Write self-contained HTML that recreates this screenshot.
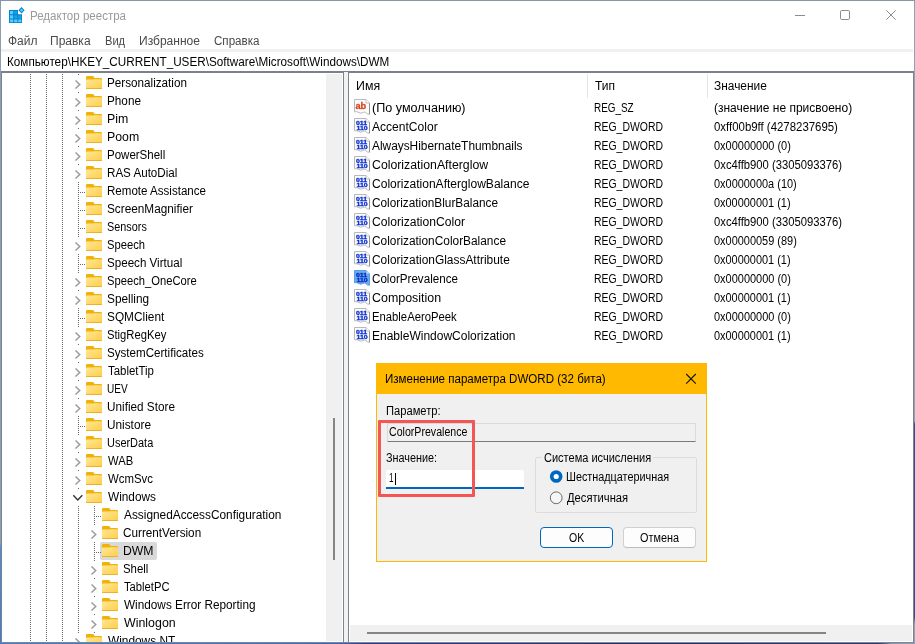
<!DOCTYPE html>
<html lang="ru"><head><meta charset="utf-8"><title>Редактор реестра</title>
<style>
html,body{margin:0;padding:0}
body{width:915px;height:644px;overflow:hidden;position:relative;background:#1d3a86;font-family:'Liberation Sans',sans-serif;font-size:12px}
div,svg,span{position:absolute}
#root{left:0;top:0;width:915px;height:644px;will-change:transform;overflow:hidden}
.t{white-space:pre;line-height:16px;transform-origin:0 0;display:block}
#desk{left:0;top:0;width:915px;height:644px;background:linear-gradient(90deg,#3d80d0 0,#3a78c8 22%,#2f68c4 37%,#1f3f94 40%,#1b3278 70%,#22387a 96%,#7f97bd 97.5%,#8fa3bd 100%)}
#frame{left:0;top:0;width:914px;height:643px;background:linear-gradient(180deg,#7f97ad 0,#8a9fb3 1%,#8a9fb3 84.3%,#4a8fd2 85.3%,#3d7ccb 100%)}
#rb{left:914px;top:0;width:1px;height:643px;background:linear-gradient(180deg,#7f97ad 0,#8fa3b5 1%,#8fa3b5 65.4%,#2f4f9a 66%,#2f4f9a 96%,#8fa3bd 97%)}
#win{left:1px;top:1px;width:913px;height:641px;background:#fff}
#dk{left:0;top:643px;width:915px;height:1px;background:linear-gradient(90deg,#3d80d0 0,#3a78c8 22%,#2f68c4 37%,#1f3f94 40%,#1b3278 70%,#22387a 96%,#7f97bd 97.5%,#8fa3bd 100%)}
#bb{left:1px;top:642px;width:913px;height:1px;background:#80858f}
#strip{left:1px;top:49px;width:912px;height:3px;background:#f0f0f0}
#hline{left:1px;top:71px;width:913px;height:2px;background:#7c8088}
.vline{width:1px;top:73px;height:570px;background:#7d828d}
.dots{width:1px;top:74px;height:568px;background:repeating-linear-gradient(180deg,#6a6a6a 0 1px,transparent 1px 2px)}
.hd{height:1px;background:repeating-linear-gradient(90deg,#6a6a6a 0 1px,transparent 1px 2px)}
.er{width:9px;height:16px;background:#fff}
.sel{background:#d9d9d9;border-radius:2px}
#tree{left:2px;top:73px;width:341px;height:569px;overflow:hidden}
</style></head><body><div id="root">
<svg width="0" height="0"><defs><linearGradient id="fg" x1="0" y1="0" x2="1" y2="1"><stop offset="0" stop-color="#ffe796"/><stop offset="1" stop-color="#ffcd48"/></linearGradient></defs></svg>
<div id="desk"></div><div id="frame"></div><div id="rb"></div>
<div id="win"></div>
<!--TITLE-->
<svg style="left:9px;top:7px" width="16" height="17" viewBox="0 0 16 17">
<path d="M0 3H9V7.3H13V16H0Z" fill="#0a7fcc"/>
<g fill="#4fd0ff"><rect x="1" y="4" width="3.2" height="3.2"/><rect x="1" y="8.3" width="3.2" height="3.2"/><rect x="1" y="12.5" width="3.2" height="2.7"/><rect x="5.2" y="12.5" width="3.2" height="2.7"/><rect x="9.3" y="12.5" width="3" height="2.7"/></g>
<g fill="#0ca5e6"><rect x="5.2" y="4" width="3" height="3.2"/><rect x="5.2" y="8.3" width="3.2" height="3.2"/><rect x="9.3" y="8.3" width="3" height="3.2"/></g>
<path d="M12.5 0L15.6 3.2L12.5 6.4L9.4 3.2Z" fill="#0a7fcc"/><path d="M12.5 1.5L14.2 3.2L12.5 4.9L10.8 3.2Z" fill="#4fd0ff"/>
</svg>
<svg style="left:790px;top:5px" width="115" height="22" viewBox="0 0 115 22" fill="none" stroke="#8c8c8c" stroke-width="1">
<path d="M5 10.5H15"/><rect x="50.5" y="5.5" width="9" height="9" rx="1.3"/><path d="M96.3 5.3L105.7 14.7M105.7 5.3L96.3 14.7"/></svg>
<div id="strip"></div><div id="hline"></div>
<!--TREE-->
<div class="vline" style="left:1px"></div>
<div class="dots" style="left:30px"></div><div class="dots" style="left:46px"></div><div class="dots" style="left:62px"></div><div class="dots" style="left:78px"></div>
<div class="dots" style="left:94px;top:506px;height:128px"></div>
<div class="er" style="left:74px;top:76px"></div><svg class="ch" style="left:74px;top:79px" width="8" height="11" viewBox="0 0 8 11"><path d="M1.5 1.5L5.7 5.5L1.5 9.5" fill="none" stroke="#9c9c9c" stroke-width="1.55"/></svg><svg class="fo" style="left:86px;top:76px" width="16" height="13" viewBox="0 0 16 13"><path d="M0 1.2Q0 0 1.2 0H6.6Q7.3 0 7.7 .6L8.6 2H14.8Q16 2 16 3.2V11.8Q16 13 14.8 13H1.2Q0 13 0 11.8Z" fill="#f0b20a"/><path d="M0 4.6Q0 3.6 1 3.6H7.2Q7.8 3.6 8.3 3.3H15Q16 3.3 16 4.3V11.8Q16 13 14.8 13H1.2Q0 13 0 11.8Z" fill="url(#fg)"/><path d="M0 11.4V11.8Q0 13 1.2 13H14.8Q16 13 16 11.8V11.4Q16 12.2 14.8 12.2H1.2Q0 12.2 0 11.4Z" fill="#e5a61a"/></svg><div class="er" style="left:74px;top:94px"></div><svg class="ch" style="left:74px;top:97px" width="8" height="11" viewBox="0 0 8 11"><path d="M1.5 1.5L5.7 5.5L1.5 9.5" fill="none" stroke="#9c9c9c" stroke-width="1.55"/></svg><svg class="fo" style="left:86px;top:94px" width="16" height="13" viewBox="0 0 16 13"><path d="M0 1.2Q0 0 1.2 0H6.6Q7.3 0 7.7 .6L8.6 2H14.8Q16 2 16 3.2V11.8Q16 13 14.8 13H1.2Q0 13 0 11.8Z" fill="#f0b20a"/><path d="M0 4.6Q0 3.6 1 3.6H7.2Q7.8 3.6 8.3 3.3H15Q16 3.3 16 4.3V11.8Q16 13 14.8 13H1.2Q0 13 0 11.8Z" fill="url(#fg)"/><path d="M0 11.4V11.8Q0 13 1.2 13H14.8Q16 13 16 11.8V11.4Q16 12.2 14.8 12.2H1.2Q0 12.2 0 11.4Z" fill="#e5a61a"/></svg><div class="er" style="left:74px;top:112px"></div><svg class="ch" style="left:74px;top:115px" width="8" height="11" viewBox="0 0 8 11"><path d="M1.5 1.5L5.7 5.5L1.5 9.5" fill="none" stroke="#9c9c9c" stroke-width="1.55"/></svg><svg class="fo" style="left:86px;top:112px" width="16" height="13" viewBox="0 0 16 13"><path d="M0 1.2Q0 0 1.2 0H6.6Q7.3 0 7.7 .6L8.6 2H14.8Q16 2 16 3.2V11.8Q16 13 14.8 13H1.2Q0 13 0 11.8Z" fill="#f0b20a"/><path d="M0 4.6Q0 3.6 1 3.6H7.2Q7.8 3.6 8.3 3.3H15Q16 3.3 16 4.3V11.8Q16 13 14.8 13H1.2Q0 13 0 11.8Z" fill="url(#fg)"/><path d="M0 11.4V11.8Q0 13 1.2 13H14.8Q16 13 16 11.8V11.4Q16 12.2 14.8 12.2H1.2Q0 12.2 0 11.4Z" fill="#e5a61a"/></svg><div class="er" style="left:74px;top:130px"></div><svg class="ch" style="left:74px;top:133px" width="8" height="11" viewBox="0 0 8 11"><path d="M1.5 1.5L5.7 5.5L1.5 9.5" fill="none" stroke="#9c9c9c" stroke-width="1.55"/></svg><svg class="fo" style="left:86px;top:130px" width="16" height="13" viewBox="0 0 16 13"><path d="M0 1.2Q0 0 1.2 0H6.6Q7.3 0 7.7 .6L8.6 2H14.8Q16 2 16 3.2V11.8Q16 13 14.8 13H1.2Q0 13 0 11.8Z" fill="#f0b20a"/><path d="M0 4.6Q0 3.6 1 3.6H7.2Q7.8 3.6 8.3 3.3H15Q16 3.3 16 4.3V11.8Q16 13 14.8 13H1.2Q0 13 0 11.8Z" fill="url(#fg)"/><path d="M0 11.4V11.8Q0 13 1.2 13H14.8Q16 13 16 11.8V11.4Q16 12.2 14.8 12.2H1.2Q0 12.2 0 11.4Z" fill="#e5a61a"/></svg><div class="er" style="left:74px;top:148px"></div><svg class="ch" style="left:74px;top:151px" width="8" height="11" viewBox="0 0 8 11"><path d="M1.5 1.5L5.7 5.5L1.5 9.5" fill="none" stroke="#9c9c9c" stroke-width="1.55"/></svg><svg class="fo" style="left:86px;top:148px" width="16" height="13" viewBox="0 0 16 13"><path d="M0 1.2Q0 0 1.2 0H6.6Q7.3 0 7.7 .6L8.6 2H14.8Q16 2 16 3.2V11.8Q16 13 14.8 13H1.2Q0 13 0 11.8Z" fill="#f0b20a"/><path d="M0 4.6Q0 3.6 1 3.6H7.2Q7.8 3.6 8.3 3.3H15Q16 3.3 16 4.3V11.8Q16 13 14.8 13H1.2Q0 13 0 11.8Z" fill="url(#fg)"/><path d="M0 11.4V11.8Q0 13 1.2 13H14.8Q16 13 16 11.8V11.4Q16 12.2 14.8 12.2H1.2Q0 12.2 0 11.4Z" fill="#e5a61a"/></svg><div class="er" style="left:74px;top:166px"></div><svg class="ch" style="left:74px;top:169px" width="8" height="11" viewBox="0 0 8 11"><path d="M1.5 1.5L5.7 5.5L1.5 9.5" fill="none" stroke="#9c9c9c" stroke-width="1.55"/></svg><svg class="fo" style="left:86px;top:166px" width="16" height="13" viewBox="0 0 16 13"><path d="M0 1.2Q0 0 1.2 0H6.6Q7.3 0 7.7 .6L8.6 2H14.8Q16 2 16 3.2V11.8Q16 13 14.8 13H1.2Q0 13 0 11.8Z" fill="#f0b20a"/><path d="M0 4.6Q0 3.6 1 3.6H7.2Q7.8 3.6 8.3 3.3H15Q16 3.3 16 4.3V11.8Q16 13 14.8 13H1.2Q0 13 0 11.8Z" fill="url(#fg)"/><path d="M0 11.4V11.8Q0 13 1.2 13H14.8Q16 13 16 11.8V11.4Q16 12.2 14.8 12.2H1.2Q0 12.2 0 11.4Z" fill="#e5a61a"/></svg><div class="hd" style="left:80px;top:192px;width:6px"></div><svg class="fo" style="left:86px;top:184px" width="16" height="13" viewBox="0 0 16 13"><path d="M0 1.2Q0 0 1.2 0H6.6Q7.3 0 7.7 .6L8.6 2H14.8Q16 2 16 3.2V11.8Q16 13 14.8 13H1.2Q0 13 0 11.8Z" fill="#f0b20a"/><path d="M0 4.6Q0 3.6 1 3.6H7.2Q7.8 3.6 8.3 3.3H15Q16 3.3 16 4.3V11.8Q16 13 14.8 13H1.2Q0 13 0 11.8Z" fill="url(#fg)"/><path d="M0 11.4V11.8Q0 13 1.2 13H14.8Q16 13 16 11.8V11.4Q16 12.2 14.8 12.2H1.2Q0 12.2 0 11.4Z" fill="#e5a61a"/></svg><div class="hd" style="left:80px;top:210px;width:6px"></div><svg class="fo" style="left:86px;top:202px" width="16" height="13" viewBox="0 0 16 13"><path d="M0 1.2Q0 0 1.2 0H6.6Q7.3 0 7.7 .6L8.6 2H14.8Q16 2 16 3.2V11.8Q16 13 14.8 13H1.2Q0 13 0 11.8Z" fill="#f0b20a"/><path d="M0 4.6Q0 3.6 1 3.6H7.2Q7.8 3.6 8.3 3.3H15Q16 3.3 16 4.3V11.8Q16 13 14.8 13H1.2Q0 13 0 11.8Z" fill="url(#fg)"/><path d="M0 11.4V11.8Q0 13 1.2 13H14.8Q16 13 16 11.8V11.4Q16 12.2 14.8 12.2H1.2Q0 12.2 0 11.4Z" fill="#e5a61a"/></svg><div class="hd" style="left:80px;top:228px;width:6px"></div><svg class="fo" style="left:86px;top:220px" width="16" height="13" viewBox="0 0 16 13"><path d="M0 1.2Q0 0 1.2 0H6.6Q7.3 0 7.7 .6L8.6 2H14.8Q16 2 16 3.2V11.8Q16 13 14.8 13H1.2Q0 13 0 11.8Z" fill="#f0b20a"/><path d="M0 4.6Q0 3.6 1 3.6H7.2Q7.8 3.6 8.3 3.3H15Q16 3.3 16 4.3V11.8Q16 13 14.8 13H1.2Q0 13 0 11.8Z" fill="url(#fg)"/><path d="M0 11.4V11.8Q0 13 1.2 13H14.8Q16 13 16 11.8V11.4Q16 12.2 14.8 12.2H1.2Q0 12.2 0 11.4Z" fill="#e5a61a"/></svg><div class="er" style="left:74px;top:238px"></div><svg class="ch" style="left:74px;top:241px" width="8" height="11" viewBox="0 0 8 11"><path d="M1.5 1.5L5.7 5.5L1.5 9.5" fill="none" stroke="#9c9c9c" stroke-width="1.55"/></svg><svg class="fo" style="left:86px;top:238px" width="16" height="13" viewBox="0 0 16 13"><path d="M0 1.2Q0 0 1.2 0H6.6Q7.3 0 7.7 .6L8.6 2H14.8Q16 2 16 3.2V11.8Q16 13 14.8 13H1.2Q0 13 0 11.8Z" fill="#f0b20a"/><path d="M0 4.6Q0 3.6 1 3.6H7.2Q7.8 3.6 8.3 3.3H15Q16 3.3 16 4.3V11.8Q16 13 14.8 13H1.2Q0 13 0 11.8Z" fill="url(#fg)"/><path d="M0 11.4V11.8Q0 13 1.2 13H14.8Q16 13 16 11.8V11.4Q16 12.2 14.8 12.2H1.2Q0 12.2 0 11.4Z" fill="#e5a61a"/></svg><div class="hd" style="left:80px;top:264px;width:6px"></div><svg class="fo" style="left:86px;top:256px" width="16" height="13" viewBox="0 0 16 13"><path d="M0 1.2Q0 0 1.2 0H6.6Q7.3 0 7.7 .6L8.6 2H14.8Q16 2 16 3.2V11.8Q16 13 14.8 13H1.2Q0 13 0 11.8Z" fill="#f0b20a"/><path d="M0 4.6Q0 3.6 1 3.6H7.2Q7.8 3.6 8.3 3.3H15Q16 3.3 16 4.3V11.8Q16 13 14.8 13H1.2Q0 13 0 11.8Z" fill="url(#fg)"/><path d="M0 11.4V11.8Q0 13 1.2 13H14.8Q16 13 16 11.8V11.4Q16 12.2 14.8 12.2H1.2Q0 12.2 0 11.4Z" fill="#e5a61a"/></svg><div class="er" style="left:74px;top:274px"></div><svg class="ch" style="left:74px;top:277px" width="8" height="11" viewBox="0 0 8 11"><path d="M1.5 1.5L5.7 5.5L1.5 9.5" fill="none" stroke="#9c9c9c" stroke-width="1.55"/></svg><svg class="fo" style="left:86px;top:274px" width="16" height="13" viewBox="0 0 16 13"><path d="M0 1.2Q0 0 1.2 0H6.6Q7.3 0 7.7 .6L8.6 2H14.8Q16 2 16 3.2V11.8Q16 13 14.8 13H1.2Q0 13 0 11.8Z" fill="#f0b20a"/><path d="M0 4.6Q0 3.6 1 3.6H7.2Q7.8 3.6 8.3 3.3H15Q16 3.3 16 4.3V11.8Q16 13 14.8 13H1.2Q0 13 0 11.8Z" fill="url(#fg)"/><path d="M0 11.4V11.8Q0 13 1.2 13H14.8Q16 13 16 11.8V11.4Q16 12.2 14.8 12.2H1.2Q0 12.2 0 11.4Z" fill="#e5a61a"/></svg><div class="er" style="left:74px;top:292px"></div><svg class="ch" style="left:74px;top:295px" width="8" height="11" viewBox="0 0 8 11"><path d="M1.5 1.5L5.7 5.5L1.5 9.5" fill="none" stroke="#9c9c9c" stroke-width="1.55"/></svg><svg class="fo" style="left:86px;top:292px" width="16" height="13" viewBox="0 0 16 13"><path d="M0 1.2Q0 0 1.2 0H6.6Q7.3 0 7.7 .6L8.6 2H14.8Q16 2 16 3.2V11.8Q16 13 14.8 13H1.2Q0 13 0 11.8Z" fill="#f0b20a"/><path d="M0 4.6Q0 3.6 1 3.6H7.2Q7.8 3.6 8.3 3.3H15Q16 3.3 16 4.3V11.8Q16 13 14.8 13H1.2Q0 13 0 11.8Z" fill="url(#fg)"/><path d="M0 11.4V11.8Q0 13 1.2 13H14.8Q16 13 16 11.8V11.4Q16 12.2 14.8 12.2H1.2Q0 12.2 0 11.4Z" fill="#e5a61a"/></svg><div class="hd" style="left:80px;top:318px;width:6px"></div><svg class="fo" style="left:86px;top:310px" width="16" height="13" viewBox="0 0 16 13"><path d="M0 1.2Q0 0 1.2 0H6.6Q7.3 0 7.7 .6L8.6 2H14.8Q16 2 16 3.2V11.8Q16 13 14.8 13H1.2Q0 13 0 11.8Z" fill="#f0b20a"/><path d="M0 4.6Q0 3.6 1 3.6H7.2Q7.8 3.6 8.3 3.3H15Q16 3.3 16 4.3V11.8Q16 13 14.8 13H1.2Q0 13 0 11.8Z" fill="url(#fg)"/><path d="M0 11.4V11.8Q0 13 1.2 13H14.8Q16 13 16 11.8V11.4Q16 12.2 14.8 12.2H1.2Q0 12.2 0 11.4Z" fill="#e5a61a"/></svg><div class="er" style="left:74px;top:328px"></div><svg class="ch" style="left:74px;top:331px" width="8" height="11" viewBox="0 0 8 11"><path d="M1.5 1.5L5.7 5.5L1.5 9.5" fill="none" stroke="#9c9c9c" stroke-width="1.55"/></svg><svg class="fo" style="left:86px;top:328px" width="16" height="13" viewBox="0 0 16 13"><path d="M0 1.2Q0 0 1.2 0H6.6Q7.3 0 7.7 .6L8.6 2H14.8Q16 2 16 3.2V11.8Q16 13 14.8 13H1.2Q0 13 0 11.8Z" fill="#f0b20a"/><path d="M0 4.6Q0 3.6 1 3.6H7.2Q7.8 3.6 8.3 3.3H15Q16 3.3 16 4.3V11.8Q16 13 14.8 13H1.2Q0 13 0 11.8Z" fill="url(#fg)"/><path d="M0 11.4V11.8Q0 13 1.2 13H14.8Q16 13 16 11.8V11.4Q16 12.2 14.8 12.2H1.2Q0 12.2 0 11.4Z" fill="#e5a61a"/></svg><div class="er" style="left:74px;top:346px"></div><svg class="ch" style="left:74px;top:349px" width="8" height="11" viewBox="0 0 8 11"><path d="M1.5 1.5L5.7 5.5L1.5 9.5" fill="none" stroke="#9c9c9c" stroke-width="1.55"/></svg><svg class="fo" style="left:86px;top:346px" width="16" height="13" viewBox="0 0 16 13"><path d="M0 1.2Q0 0 1.2 0H6.6Q7.3 0 7.7 .6L8.6 2H14.8Q16 2 16 3.2V11.8Q16 13 14.8 13H1.2Q0 13 0 11.8Z" fill="#f0b20a"/><path d="M0 4.6Q0 3.6 1 3.6H7.2Q7.8 3.6 8.3 3.3H15Q16 3.3 16 4.3V11.8Q16 13 14.8 13H1.2Q0 13 0 11.8Z" fill="url(#fg)"/><path d="M0 11.4V11.8Q0 13 1.2 13H14.8Q16 13 16 11.8V11.4Q16 12.2 14.8 12.2H1.2Q0 12.2 0 11.4Z" fill="#e5a61a"/></svg><div class="er" style="left:74px;top:364px"></div><svg class="ch" style="left:74px;top:367px" width="8" height="11" viewBox="0 0 8 11"><path d="M1.5 1.5L5.7 5.5L1.5 9.5" fill="none" stroke="#9c9c9c" stroke-width="1.55"/></svg><svg class="fo" style="left:86px;top:364px" width="16" height="13" viewBox="0 0 16 13"><path d="M0 1.2Q0 0 1.2 0H6.6Q7.3 0 7.7 .6L8.6 2H14.8Q16 2 16 3.2V11.8Q16 13 14.8 13H1.2Q0 13 0 11.8Z" fill="#f0b20a"/><path d="M0 4.6Q0 3.6 1 3.6H7.2Q7.8 3.6 8.3 3.3H15Q16 3.3 16 4.3V11.8Q16 13 14.8 13H1.2Q0 13 0 11.8Z" fill="url(#fg)"/><path d="M0 11.4V11.8Q0 13 1.2 13H14.8Q16 13 16 11.8V11.4Q16 12.2 14.8 12.2H1.2Q0 12.2 0 11.4Z" fill="#e5a61a"/></svg><div class="er" style="left:74px;top:382px"></div><svg class="ch" style="left:74px;top:385px" width="8" height="11" viewBox="0 0 8 11"><path d="M1.5 1.5L5.7 5.5L1.5 9.5" fill="none" stroke="#9c9c9c" stroke-width="1.55"/></svg><svg class="fo" style="left:86px;top:382px" width="16" height="13" viewBox="0 0 16 13"><path d="M0 1.2Q0 0 1.2 0H6.6Q7.3 0 7.7 .6L8.6 2H14.8Q16 2 16 3.2V11.8Q16 13 14.8 13H1.2Q0 13 0 11.8Z" fill="#f0b20a"/><path d="M0 4.6Q0 3.6 1 3.6H7.2Q7.8 3.6 8.3 3.3H15Q16 3.3 16 4.3V11.8Q16 13 14.8 13H1.2Q0 13 0 11.8Z" fill="url(#fg)"/><path d="M0 11.4V11.8Q0 13 1.2 13H14.8Q16 13 16 11.8V11.4Q16 12.2 14.8 12.2H1.2Q0 12.2 0 11.4Z" fill="#e5a61a"/></svg><div class="er" style="left:74px;top:400px"></div><svg class="ch" style="left:74px;top:403px" width="8" height="11" viewBox="0 0 8 11"><path d="M1.5 1.5L5.7 5.5L1.5 9.5" fill="none" stroke="#9c9c9c" stroke-width="1.55"/></svg><svg class="fo" style="left:86px;top:400px" width="16" height="13" viewBox="0 0 16 13"><path d="M0 1.2Q0 0 1.2 0H6.6Q7.3 0 7.7 .6L8.6 2H14.8Q16 2 16 3.2V11.8Q16 13 14.8 13H1.2Q0 13 0 11.8Z" fill="#f0b20a"/><path d="M0 4.6Q0 3.6 1 3.6H7.2Q7.8 3.6 8.3 3.3H15Q16 3.3 16 4.3V11.8Q16 13 14.8 13H1.2Q0 13 0 11.8Z" fill="url(#fg)"/><path d="M0 11.4V11.8Q0 13 1.2 13H14.8Q16 13 16 11.8V11.4Q16 12.2 14.8 12.2H1.2Q0 12.2 0 11.4Z" fill="#e5a61a"/></svg><div class="hd" style="left:80px;top:426px;width:6px"></div><svg class="fo" style="left:86px;top:418px" width="16" height="13" viewBox="0 0 16 13"><path d="M0 1.2Q0 0 1.2 0H6.6Q7.3 0 7.7 .6L8.6 2H14.8Q16 2 16 3.2V11.8Q16 13 14.8 13H1.2Q0 13 0 11.8Z" fill="#f0b20a"/><path d="M0 4.6Q0 3.6 1 3.6H7.2Q7.8 3.6 8.3 3.3H15Q16 3.3 16 4.3V11.8Q16 13 14.8 13H1.2Q0 13 0 11.8Z" fill="url(#fg)"/><path d="M0 11.4V11.8Q0 13 1.2 13H14.8Q16 13 16 11.8V11.4Q16 12.2 14.8 12.2H1.2Q0 12.2 0 11.4Z" fill="#e5a61a"/></svg><div class="er" style="left:74px;top:436px"></div><svg class="ch" style="left:74px;top:439px" width="8" height="11" viewBox="0 0 8 11"><path d="M1.5 1.5L5.7 5.5L1.5 9.5" fill="none" stroke="#9c9c9c" stroke-width="1.55"/></svg><svg class="fo" style="left:86px;top:436px" width="16" height="13" viewBox="0 0 16 13"><path d="M0 1.2Q0 0 1.2 0H6.6Q7.3 0 7.7 .6L8.6 2H14.8Q16 2 16 3.2V11.8Q16 13 14.8 13H1.2Q0 13 0 11.8Z" fill="#f0b20a"/><path d="M0 4.6Q0 3.6 1 3.6H7.2Q7.8 3.6 8.3 3.3H15Q16 3.3 16 4.3V11.8Q16 13 14.8 13H1.2Q0 13 0 11.8Z" fill="url(#fg)"/><path d="M0 11.4V11.8Q0 13 1.2 13H14.8Q16 13 16 11.8V11.4Q16 12.2 14.8 12.2H1.2Q0 12.2 0 11.4Z" fill="#e5a61a"/></svg><div class="er" style="left:74px;top:454px"></div><svg class="ch" style="left:74px;top:457px" width="8" height="11" viewBox="0 0 8 11"><path d="M1.5 1.5L5.7 5.5L1.5 9.5" fill="none" stroke="#9c9c9c" stroke-width="1.55"/></svg><svg class="fo" style="left:86px;top:454px" width="16" height="13" viewBox="0 0 16 13"><path d="M0 1.2Q0 0 1.2 0H6.6Q7.3 0 7.7 .6L8.6 2H14.8Q16 2 16 3.2V11.8Q16 13 14.8 13H1.2Q0 13 0 11.8Z" fill="#f0b20a"/><path d="M0 4.6Q0 3.6 1 3.6H7.2Q7.8 3.6 8.3 3.3H15Q16 3.3 16 4.3V11.8Q16 13 14.8 13H1.2Q0 13 0 11.8Z" fill="url(#fg)"/><path d="M0 11.4V11.8Q0 13 1.2 13H14.8Q16 13 16 11.8V11.4Q16 12.2 14.8 12.2H1.2Q0 12.2 0 11.4Z" fill="#e5a61a"/></svg><div class="er" style="left:74px;top:472px"></div><svg class="ch" style="left:74px;top:475px" width="8" height="11" viewBox="0 0 8 11"><path d="M1.5 1.5L5.7 5.5L1.5 9.5" fill="none" stroke="#9c9c9c" stroke-width="1.55"/></svg><svg class="fo" style="left:86px;top:472px" width="16" height="13" viewBox="0 0 16 13"><path d="M0 1.2Q0 0 1.2 0H6.6Q7.3 0 7.7 .6L8.6 2H14.8Q16 2 16 3.2V11.8Q16 13 14.8 13H1.2Q0 13 0 11.8Z" fill="#f0b20a"/><path d="M0 4.6Q0 3.6 1 3.6H7.2Q7.8 3.6 8.3 3.3H15Q16 3.3 16 4.3V11.8Q16 13 14.8 13H1.2Q0 13 0 11.8Z" fill="url(#fg)"/><path d="M0 11.4V11.8Q0 13 1.2 13H14.8Q16 13 16 11.8V11.4Q16 12.2 14.8 12.2H1.2Q0 12.2 0 11.4Z" fill="#e5a61a"/></svg><div class="er" style="left:74px;top:490px"></div><svg class="ch" style="left:72px;top:494px" width="12" height="8" viewBox="0 0 12 8"><path d="M1.3 1.3L5.8 5.9L10.3 1.3" fill="none" stroke="#333" stroke-width="1.4"/></svg><svg class="fo" style="left:86px;top:490px" width="16" height="13" viewBox="0 0 16 13"><path d="M0 1.2Q0 0 1.2 0H6.6Q7.3 0 7.7 .6L8.6 2H14.8Q16 2 16 3.2V11.8Q16 13 14.8 13H1.2Q0 13 0 11.8Z" fill="#f0b20a"/><path d="M0 4.6Q0 3.6 1 3.6H7.2Q7.8 3.6 8.3 3.3H15Q16 3.3 16 4.3V11.8Q16 13 14.8 13H1.2Q0 13 0 11.8Z" fill="url(#fg)"/><path d="M0 11.4V11.8Q0 13 1.2 13H14.8Q16 13 16 11.8V11.4Q16 12.2 14.8 12.2H1.2Q0 12.2 0 11.4Z" fill="#e5a61a"/></svg><div class="hd" style="left:96px;top:516px;width:6px"></div><svg class="fo" style="left:102px;top:508px" width="16" height="13" viewBox="0 0 16 13"><path d="M0 1.2Q0 0 1.2 0H6.6Q7.3 0 7.7 .6L8.6 2H14.8Q16 2 16 3.2V11.8Q16 13 14.8 13H1.2Q0 13 0 11.8Z" fill="#f0b20a"/><path d="M0 4.6Q0 3.6 1 3.6H7.2Q7.8 3.6 8.3 3.3H15Q16 3.3 16 4.3V11.8Q16 13 14.8 13H1.2Q0 13 0 11.8Z" fill="url(#fg)"/><path d="M0 11.4V11.8Q0 13 1.2 13H14.8Q16 13 16 11.8V11.4Q16 12.2 14.8 12.2H1.2Q0 12.2 0 11.4Z" fill="#e5a61a"/></svg><div class="er" style="left:90px;top:526px"></div><svg class="ch" style="left:90px;top:529px" width="8" height="11" viewBox="0 0 8 11"><path d="M1.5 1.5L5.7 5.5L1.5 9.5" fill="none" stroke="#9c9c9c" stroke-width="1.55"/></svg><svg class="fo" style="left:102px;top:526px" width="16" height="13" viewBox="0 0 16 13"><path d="M0 1.2Q0 0 1.2 0H6.6Q7.3 0 7.7 .6L8.6 2H14.8Q16 2 16 3.2V11.8Q16 13 14.8 13H1.2Q0 13 0 11.8Z" fill="#f0b20a"/><path d="M0 4.6Q0 3.6 1 3.6H7.2Q7.8 3.6 8.3 3.3H15Q16 3.3 16 4.3V11.8Q16 13 14.8 13H1.2Q0 13 0 11.8Z" fill="url(#fg)"/><path d="M0 11.4V11.8Q0 13 1.2 13H14.8Q16 13 16 11.8V11.4Q16 12.2 14.8 12.2H1.2Q0 12.2 0 11.4Z" fill="#e5a61a"/></svg><div class="sel" style="left:100px;top:542px;width:57px;height:18px"></div><div class="hd" style="left:96px;top:552px;width:6px"></div><svg class="fo" style="left:102px;top:544px" width="16" height="13" viewBox="0 0 16 13"><path d="M0 1.2Q0 0 1.2 0H6.6Q7.3 0 7.7 .6L8.6 2H14.8Q16 2 16 3.2V11.8Q16 13 14.8 13H1.2Q0 13 0 11.8Z" fill="#f0b20a"/><path d="M0 4.6Q0 3.6 1 3.6H7.2Q7.8 3.6 8.3 3.3H15Q16 3.3 16 4.3V11.8Q16 13 14.8 13H1.2Q0 13 0 11.8Z" fill="url(#fg)"/><path d="M0 11.4V11.8Q0 13 1.2 13H14.8Q16 13 16 11.8V11.4Q16 12.2 14.8 12.2H1.2Q0 12.2 0 11.4Z" fill="#e5a61a"/></svg><div class="er" style="left:90px;top:562px"></div><svg class="ch" style="left:90px;top:565px" width="8" height="11" viewBox="0 0 8 11"><path d="M1.5 1.5L5.7 5.5L1.5 9.5" fill="none" stroke="#9c9c9c" stroke-width="1.55"/></svg><svg class="fo" style="left:102px;top:562px" width="16" height="13" viewBox="0 0 16 13"><path d="M0 1.2Q0 0 1.2 0H6.6Q7.3 0 7.7 .6L8.6 2H14.8Q16 2 16 3.2V11.8Q16 13 14.8 13H1.2Q0 13 0 11.8Z" fill="#f0b20a"/><path d="M0 4.6Q0 3.6 1 3.6H7.2Q7.8 3.6 8.3 3.3H15Q16 3.3 16 4.3V11.8Q16 13 14.8 13H1.2Q0 13 0 11.8Z" fill="url(#fg)"/><path d="M0 11.4V11.8Q0 13 1.2 13H14.8Q16 13 16 11.8V11.4Q16 12.2 14.8 12.2H1.2Q0 12.2 0 11.4Z" fill="#e5a61a"/></svg><div class="er" style="left:90px;top:580px"></div><svg class="ch" style="left:90px;top:583px" width="8" height="11" viewBox="0 0 8 11"><path d="M1.5 1.5L5.7 5.5L1.5 9.5" fill="none" stroke="#9c9c9c" stroke-width="1.55"/></svg><svg class="fo" style="left:102px;top:580px" width="16" height="13" viewBox="0 0 16 13"><path d="M0 1.2Q0 0 1.2 0H6.6Q7.3 0 7.7 .6L8.6 2H14.8Q16 2 16 3.2V11.8Q16 13 14.8 13H1.2Q0 13 0 11.8Z" fill="#f0b20a"/><path d="M0 4.6Q0 3.6 1 3.6H7.2Q7.8 3.6 8.3 3.3H15Q16 3.3 16 4.3V11.8Q16 13 14.8 13H1.2Q0 13 0 11.8Z" fill="url(#fg)"/><path d="M0 11.4V11.8Q0 13 1.2 13H14.8Q16 13 16 11.8V11.4Q16 12.2 14.8 12.2H1.2Q0 12.2 0 11.4Z" fill="#e5a61a"/></svg><div class="er" style="left:90px;top:598px"></div><svg class="ch" style="left:90px;top:601px" width="8" height="11" viewBox="0 0 8 11"><path d="M1.5 1.5L5.7 5.5L1.5 9.5" fill="none" stroke="#9c9c9c" stroke-width="1.55"/></svg><svg class="fo" style="left:102px;top:598px" width="16" height="13" viewBox="0 0 16 13"><path d="M0 1.2Q0 0 1.2 0H6.6Q7.3 0 7.7 .6L8.6 2H14.8Q16 2 16 3.2V11.8Q16 13 14.8 13H1.2Q0 13 0 11.8Z" fill="#f0b20a"/><path d="M0 4.6Q0 3.6 1 3.6H7.2Q7.8 3.6 8.3 3.3H15Q16 3.3 16 4.3V11.8Q16 13 14.8 13H1.2Q0 13 0 11.8Z" fill="url(#fg)"/><path d="M0 11.4V11.8Q0 13 1.2 13H14.8Q16 13 16 11.8V11.4Q16 12.2 14.8 12.2H1.2Q0 12.2 0 11.4Z" fill="#e5a61a"/></svg><div class="er" style="left:90px;top:616px"></div><svg class="ch" style="left:90px;top:619px" width="8" height="11" viewBox="0 0 8 11"><path d="M1.5 1.5L5.7 5.5L1.5 9.5" fill="none" stroke="#9c9c9c" stroke-width="1.55"/></svg><svg class="fo" style="left:102px;top:616px" width="16" height="13" viewBox="0 0 16 13"><path d="M0 1.2Q0 0 1.2 0H6.6Q7.3 0 7.7 .6L8.6 2H14.8Q16 2 16 3.2V11.8Q16 13 14.8 13H1.2Q0 13 0 11.8Z" fill="#f0b20a"/><path d="M0 4.6Q0 3.6 1 3.6H7.2Q7.8 3.6 8.3 3.3H15Q16 3.3 16 4.3V11.8Q16 13 14.8 13H1.2Q0 13 0 11.8Z" fill="url(#fg)"/><path d="M0 11.4V11.8Q0 13 1.2 13H14.8Q16 13 16 11.8V11.4Q16 12.2 14.8 12.2H1.2Q0 12.2 0 11.4Z" fill="#e5a61a"/></svg><div class="er" style="left:74px;top:634px"></div><svg class="ch" style="left:74px;top:637px" width="8" height="11" viewBox="0 0 8 11"><path d="M1.5 1.5L5.7 5.5L1.5 9.5" fill="none" stroke="#9c9c9c" stroke-width="1.55"/></svg><svg class="fo" style="left:86px;top:634px" width="16" height="13" viewBox="0 0 16 13"><path d="M0 1.2Q0 0 1.2 0H6.6Q7.3 0 7.7 .6L8.6 2H14.8Q16 2 16 3.2V11.8Q16 13 14.8 13H1.2Q0 13 0 11.8Z" fill="#f0b20a"/><path d="M0 4.6Q0 3.6 1 3.6H7.2Q7.8 3.6 8.3 3.3H15Q16 3.3 16 4.3V11.8Q16 13 14.8 13H1.2Q0 13 0 11.8Z" fill="url(#fg)"/><path d="M0 11.4V11.8Q0 13 1.2 13H14.8Q16 13 16 11.8V11.4Q16 12.2 14.8 12.2H1.2Q0 12.2 0 11.4Z" fill="#e5a61a"/></svg>
<div style="left:326px;top:74px;width:16px;height:567px;background:#f0f0f0"></div>
<div style="left:333px;top:418px;width:2px;height:142px;background:#858585"></div>
<div class="vline" style="left:343px"></div>
<div style="left:344px;top:72px;width:4px;height:570px;background:#f2f2f2"></div>
<div class="vline" style="left:348px"></div><div class="vline" style="left:913px"></div>
<!--LIST-->
<div style="left:587px;top:74px;width:1px;height:24px;background:#e5e5e5"></div>
<div style="left:707px;top:74px;width:1px;height:24px;background:#e5e5e5"></div>
<svg class="ic" style="left:354px;top:99px" width="16" height="16" viewBox="0 0 16 16"><path d="M.5 .5H12L15.5 4V15.2Q13.6 15.6 11.8 13.6Q10.6 12.4 8.6 13.6Q6.6 14.8 5 13.6Q3 12.2 .5 12.8Z" fill="#fbfbfb" stroke="#b9b9b9" stroke-width="1"/><path d="M12 .5V4H15.5" fill="#fff" stroke="#b9b9b9" stroke-width=".9"/><path d="M15.5 4.5V15.2" stroke="#8f8f8f" stroke-width="1" fill="none"/><text x="1.4" y="9.8" font-family="Liberation Sans, sans-serif" font-weight="700" font-size="9.2" fill="#d8431f" stroke="#d8431f" stroke-width=".3">ab</text></svg><svg class="ic" style="left:354px;top:118px" width="16" height="16" viewBox="0 0 16 16"><path d="M.5 .5H12L15.5 4V15.2Q13.6 15.6 11.8 13.6Q10.6 12.4 8.6 13.6Q6.6 14.8 5 13.6Q3 12.2 .5 12.8Z" fill="#fbfbfb" stroke="#b9b9b9" stroke-width="1"/><path d="M12 .5V4H15.5" fill="#fff" stroke="#b9b9b9" stroke-width=".9"/><path d="M15.5 4.5V15.2" stroke="#8f8f8f" stroke-width="1" fill="none"/><g font-family="Liberation Sans, sans-serif" font-weight="700" font-size="5" fill="#0b2fd0" stroke="#0b2fd0" stroke-width=".26"><text transform="translate(1.9,6.9) scale(1.4,1)">011</text><text transform="translate(2.4,11.5) scale(1.4,1)">110</text></g></svg><svg class="ic" style="left:354px;top:137px" width="16" height="16" viewBox="0 0 16 16"><path d="M.5 .5H12L15.5 4V15.2Q13.6 15.6 11.8 13.6Q10.6 12.4 8.6 13.6Q6.6 14.8 5 13.6Q3 12.2 .5 12.8Z" fill="#fbfbfb" stroke="#b9b9b9" stroke-width="1"/><path d="M12 .5V4H15.5" fill="#fff" stroke="#b9b9b9" stroke-width=".9"/><path d="M15.5 4.5V15.2" stroke="#8f8f8f" stroke-width="1" fill="none"/><g font-family="Liberation Sans, sans-serif" font-weight="700" font-size="5" fill="#0b2fd0" stroke="#0b2fd0" stroke-width=".26"><text transform="translate(1.9,6.9) scale(1.4,1)">011</text><text transform="translate(2.4,11.5) scale(1.4,1)">110</text></g></svg><svg class="ic" style="left:354px;top:156px" width="16" height="16" viewBox="0 0 16 16"><path d="M.5 .5H12L15.5 4V15.2Q13.6 15.6 11.8 13.6Q10.6 12.4 8.6 13.6Q6.6 14.8 5 13.6Q3 12.2 .5 12.8Z" fill="#fbfbfb" stroke="#b9b9b9" stroke-width="1"/><path d="M12 .5V4H15.5" fill="#fff" stroke="#b9b9b9" stroke-width=".9"/><path d="M15.5 4.5V15.2" stroke="#8f8f8f" stroke-width="1" fill="none"/><g font-family="Liberation Sans, sans-serif" font-weight="700" font-size="5" fill="#0b2fd0" stroke="#0b2fd0" stroke-width=".26"><text transform="translate(1.9,6.9) scale(1.4,1)">011</text><text transform="translate(2.4,11.5) scale(1.4,1)">110</text></g></svg><svg class="ic" style="left:354px;top:175px" width="16" height="16" viewBox="0 0 16 16"><path d="M.5 .5H12L15.5 4V15.2Q13.6 15.6 11.8 13.6Q10.6 12.4 8.6 13.6Q6.6 14.8 5 13.6Q3 12.2 .5 12.8Z" fill="#fbfbfb" stroke="#b9b9b9" stroke-width="1"/><path d="M12 .5V4H15.5" fill="#fff" stroke="#b9b9b9" stroke-width=".9"/><path d="M15.5 4.5V15.2" stroke="#8f8f8f" stroke-width="1" fill="none"/><g font-family="Liberation Sans, sans-serif" font-weight="700" font-size="5" fill="#0b2fd0" stroke="#0b2fd0" stroke-width=".26"><text transform="translate(1.9,6.9) scale(1.4,1)">011</text><text transform="translate(2.4,11.5) scale(1.4,1)">110</text></g></svg><svg class="ic" style="left:354px;top:194px" width="16" height="16" viewBox="0 0 16 16"><path d="M.5 .5H12L15.5 4V15.2Q13.6 15.6 11.8 13.6Q10.6 12.4 8.6 13.6Q6.6 14.8 5 13.6Q3 12.2 .5 12.8Z" fill="#fbfbfb" stroke="#b9b9b9" stroke-width="1"/><path d="M12 .5V4H15.5" fill="#fff" stroke="#b9b9b9" stroke-width=".9"/><path d="M15.5 4.5V15.2" stroke="#8f8f8f" stroke-width="1" fill="none"/><g font-family="Liberation Sans, sans-serif" font-weight="700" font-size="5" fill="#0b2fd0" stroke="#0b2fd0" stroke-width=".26"><text transform="translate(1.9,6.9) scale(1.4,1)">011</text><text transform="translate(2.4,11.5) scale(1.4,1)">110</text></g></svg><svg class="ic" style="left:354px;top:213px" width="16" height="16" viewBox="0 0 16 16"><path d="M.5 .5H12L15.5 4V15.2Q13.6 15.6 11.8 13.6Q10.6 12.4 8.6 13.6Q6.6 14.8 5 13.6Q3 12.2 .5 12.8Z" fill="#fbfbfb" stroke="#b9b9b9" stroke-width="1"/><path d="M12 .5V4H15.5" fill="#fff" stroke="#b9b9b9" stroke-width=".9"/><path d="M15.5 4.5V15.2" stroke="#8f8f8f" stroke-width="1" fill="none"/><g font-family="Liberation Sans, sans-serif" font-weight="700" font-size="5" fill="#0b2fd0" stroke="#0b2fd0" stroke-width=".26"><text transform="translate(1.9,6.9) scale(1.4,1)">011</text><text transform="translate(2.4,11.5) scale(1.4,1)">110</text></g></svg><svg class="ic" style="left:354px;top:232px" width="16" height="16" viewBox="0 0 16 16"><path d="M.5 .5H12L15.5 4V15.2Q13.6 15.6 11.8 13.6Q10.6 12.4 8.6 13.6Q6.6 14.8 5 13.6Q3 12.2 .5 12.8Z" fill="#fbfbfb" stroke="#b9b9b9" stroke-width="1"/><path d="M12 .5V4H15.5" fill="#fff" stroke="#b9b9b9" stroke-width=".9"/><path d="M15.5 4.5V15.2" stroke="#8f8f8f" stroke-width="1" fill="none"/><g font-family="Liberation Sans, sans-serif" font-weight="700" font-size="5" fill="#0b2fd0" stroke="#0b2fd0" stroke-width=".26"><text transform="translate(1.9,6.9) scale(1.4,1)">011</text><text transform="translate(2.4,11.5) scale(1.4,1)">110</text></g></svg><svg class="ic" style="left:354px;top:251px" width="16" height="16" viewBox="0 0 16 16"><path d="M.5 .5H12L15.5 4V15.2Q13.6 15.6 11.8 13.6Q10.6 12.4 8.6 13.6Q6.6 14.8 5 13.6Q3 12.2 .5 12.8Z" fill="#fbfbfb" stroke="#b9b9b9" stroke-width="1"/><path d="M12 .5V4H15.5" fill="#fff" stroke="#b9b9b9" stroke-width=".9"/><path d="M15.5 4.5V15.2" stroke="#8f8f8f" stroke-width="1" fill="none"/><g font-family="Liberation Sans, sans-serif" font-weight="700" font-size="5" fill="#0b2fd0" stroke="#0b2fd0" stroke-width=".26"><text transform="translate(1.9,6.9) scale(1.4,1)">011</text><text transform="translate(2.4,11.5) scale(1.4,1)">110</text></g></svg><svg class="ic" style="left:354px;top:270px" width="16" height="16" viewBox="0 0 16 16"><path d="M.5 .5H12L15.5 4V15.2Q13.6 15.6 11.8 13.6Q10.6 12.4 8.6 13.6Q6.6 14.8 5 13.6Q3 12.2 .5 12.8Z" fill="#6aaeef" stroke="#5a9fe4" stroke-width="1"/><path d="M12 .5V4H15.5" fill="#cfe3fa" stroke="#5a9fe4" stroke-width=".9"/><g font-family="Liberation Sans, sans-serif" font-weight="700" font-size="5" fill="#0a2bc0" stroke="#0a2bc0" stroke-width=".26"><text transform="translate(1.9,6.9) scale(1.4,1)">011</text><text transform="translate(2.4,11.5) scale(1.4,1)">110</text></g></svg><svg class="ic" style="left:354px;top:289px" width="16" height="16" viewBox="0 0 16 16"><path d="M.5 .5H12L15.5 4V15.2Q13.6 15.6 11.8 13.6Q10.6 12.4 8.6 13.6Q6.6 14.8 5 13.6Q3 12.2 .5 12.8Z" fill="#fbfbfb" stroke="#b9b9b9" stroke-width="1"/><path d="M12 .5V4H15.5" fill="#fff" stroke="#b9b9b9" stroke-width=".9"/><path d="M15.5 4.5V15.2" stroke="#8f8f8f" stroke-width="1" fill="none"/><g font-family="Liberation Sans, sans-serif" font-weight="700" font-size="5" fill="#0b2fd0" stroke="#0b2fd0" stroke-width=".26"><text transform="translate(1.9,6.9) scale(1.4,1)">011</text><text transform="translate(2.4,11.5) scale(1.4,1)">110</text></g></svg><svg class="ic" style="left:354px;top:308px" width="16" height="16" viewBox="0 0 16 16"><path d="M.5 .5H12L15.5 4V15.2Q13.6 15.6 11.8 13.6Q10.6 12.4 8.6 13.6Q6.6 14.8 5 13.6Q3 12.2 .5 12.8Z" fill="#fbfbfb" stroke="#b9b9b9" stroke-width="1"/><path d="M12 .5V4H15.5" fill="#fff" stroke="#b9b9b9" stroke-width=".9"/><path d="M15.5 4.5V15.2" stroke="#8f8f8f" stroke-width="1" fill="none"/><g font-family="Liberation Sans, sans-serif" font-weight="700" font-size="5" fill="#0b2fd0" stroke="#0b2fd0" stroke-width=".26"><text transform="translate(1.9,6.9) scale(1.4,1)">011</text><text transform="translate(2.4,11.5) scale(1.4,1)">110</text></g></svg><svg class="ic" style="left:354px;top:327px" width="16" height="16" viewBox="0 0 16 16"><path d="M.5 .5H12L15.5 4V15.2Q13.6 15.6 11.8 13.6Q10.6 12.4 8.6 13.6Q6.6 14.8 5 13.6Q3 12.2 .5 12.8Z" fill="#fbfbfb" stroke="#b9b9b9" stroke-width="1"/><path d="M12 .5V4H15.5" fill="#fff" stroke="#b9b9b9" stroke-width=".9"/><path d="M15.5 4.5V15.2" stroke="#8f8f8f" stroke-width="1" fill="none"/><g font-family="Liberation Sans, sans-serif" font-weight="700" font-size="5" fill="#0b2fd0" stroke="#0b2fd0" stroke-width=".26"><text transform="translate(1.9,6.9) scale(1.4,1)">011</text><text transform="translate(2.4,11.5) scale(1.4,1)">110</text></g></svg>
<div style="left:350px;top:625px;width:562px;height:16px;background:#f0f0f0"></div>
<div style="left:367px;top:632px;width:459px;height:2px;background:#858585"></div>
<!--DIALOG-->
<div style="left:376px;top:363px;width:331px;height:199px;background:#ffb900"></div>
<div style="left:377px;top:394px;width:329px;height:167px;background:#f0f0f0"></div>
<svg style="left:685px;top:373px" width="12" height="12" viewBox="0 0 12 12"><path d="M1.2 1L10.8 10.6M10.8 1L1.2 10.6" stroke="#111" stroke-width="1.1" fill="none"/></svg>
<div style="left:387px;top:423px;width:309px;height:19px;box-sizing:border-box;border:1px solid #dadada;border-bottom:1px solid #7a7a7a;background:#f0f0f0;border-radius:1px"></div>
<div style="left:386px;top:470px;width:138px;height:17px;background:#fff;border-radius:2px 2px 0 0"></div>
<div style="left:386px;top:487px;width:138px;height:2px;background:#0067c0"></div>
<div style="left:395px;top:473px;width:1px;height:12px;background:#000"></div>
<div style="left:535px;top:457px;width:162px;height:56px;box-sizing:border-box;border:1px solid #dcdcdc;border-radius:2px"></div>
<div style="left:542px;top:452px;width:111px;height:12px;background:#f0f0f0"></div>
<svg style="left:549px;top:469px" width="15" height="37" viewBox="0 0 15 37"><circle cx="7.2" cy="7.5" r="6.3" fill="#0067c0"/><circle cx="7.2" cy="7.5" r="2.6" fill="#fff"/><circle cx="7.2" cy="28.8" r="5.9" fill="#f6f6f6" stroke="#6b6b6b" stroke-width="1"/></svg>
<div style="left:540px;top:527px;width:73px;height:21px;box-sizing:border-box;border:1px solid #0067c0;border-radius:4px;background:#fdfdfd"></div>
<div style="left:623px;top:527px;width:73px;height:21px;box-sizing:border-box;border:1px solid #d0d0d0;border-bottom-color:#bcbcbc;border-radius:4px;background:#fdfdfd"></div>
<div style="left:378px;top:420px;width:97px;height:77px;box-sizing:border-box;border:3px solid #f25656;border-radius:1px"></div>
<!--TEXT-->
<span class="t" style="left:29.64px;top:7.84px;font-size:12px;color:#9a9a9a;transform:scaleX(0.9618)">Редактор реестра</span><span class="t" style="left:8.08px;top:32.84px;font-size:12px;color:#4a4a4a;transform:scaleX(0.9989)">Файл</span><span class="t" style="left:50.30px;top:32.84px;font-size:12px;color:#4a4a4a;transform:scaleX(1.0009)">Правка</span><span class="t" style="left:104.87px;top:32.84px;font-size:12px;color:#4a4a4a;transform:scaleX(0.9251)">Вид</span><span class="t" style="left:139.00px;top:32.84px;font-size:12px;color:#4a4a4a;transform:scaleX(1.0026)">Избранное</span><span class="t" style="left:214.28px;top:32.84px;font-size:12px;color:#4a4a4a;transform:scaleX(0.9657)">Справка</span><span class="t" style="left:6.62px;top:53.84px;font-size:12px;color:#000;transform:scaleX(0.9766)">Компьютер\HKEY_CURRENT_USER\Software\Microsoft\Windows\DWM</span><span class="t" style="left:106.93px;top:74.84px;font-size:12px;color:#000;transform:scaleX(0.9741)">Personalization</span><span class="t" style="left:106.92px;top:92.84px;font-size:12px;color:#000;transform:scaleX(0.9788)">Phone</span><span class="t" style="left:106.87px;top:110.84px;font-size:12px;color:#000;transform:scaleX(1.0295)">Pim</span><span class="t" style="left:106.87px;top:128.84px;font-size:12px;color:#000;transform:scaleX(1.0256)">Poom</span><span class="t" style="left:106.94px;top:146.84px;font-size:12px;color:#000;transform:scaleX(0.9586)">PowerShell</span><span class="t" style="left:106.93px;top:164.84px;font-size:12px;color:#000;transform:scaleX(0.9670)">RAS AutoDial</span><span class="t" style="left:106.94px;top:182.84px;font-size:12px;color:#000;transform:scaleX(0.9634)">Remote Assistance</span><span class="t" style="left:106.92px;top:200.84px;font-size:12px;color:#000;transform:scaleX(0.9827)">ScreenMagnifier</span><span class="t" style="left:107.00px;top:218.84px;font-size:12px;color:#000;transform:scaleX(0.9041)">Sensors</span><span class="t" style="left:106.97px;top:236.84px;font-size:12px;color:#000;transform:scaleX(0.9339)">Speech</span><span class="t" style="left:106.93px;top:254.84px;font-size:12px;color:#000;transform:scaleX(0.9668)">Speech Virtual</span><span class="t" style="left:106.97px;top:272.84px;font-size:12px;color:#000;transform:scaleX(0.9336)">Speech_OneCore</span><span class="t" style="left:106.92px;top:290.84px;font-size:12px;color:#000;transform:scaleX(0.9842)">Spelling</span><span class="t" style="left:106.91px;top:308.84px;font-size:12px;color:#000;transform:scaleX(0.9870)">SQMClient</span><span class="t" style="left:106.96px;top:326.84px;font-size:12px;color:#000;transform:scaleX(0.9360)">StigRegKey</span><span class="t" style="left:106.93px;top:344.84px;font-size:12px;color:#000;transform:scaleX(0.9667)">SystemCertificates</span><span class="t" style="left:107.63px;top:362.84px;font-size:12px;color:#000;transform:scaleX(0.9525)">TabletTip</span><span class="t" style="left:107.06px;top:380.84px;font-size:12px;color:#000;transform:scaleX(0.8381)">UEV</span><span class="t" style="left:106.92px;top:398.84px;font-size:12px;color:#000;transform:scaleX(0.9790)">Unified Store</span><span class="t" style="left:106.92px;top:416.84px;font-size:12px;color:#000;transform:scaleX(0.9837)">Unistore</span><span class="t" style="left:106.99px;top:434.84px;font-size:12px;color:#000;transform:scaleX(0.9121)">UserData</span><span class="t" style="left:107.71px;top:452.84px;font-size:12px;color:#000;transform:scaleX(0.9348)">WAB</span><span class="t" style="left:107.71px;top:470.84px;font-size:12px;color:#000;transform:scaleX(0.9506)">WcmSvc</span><span class="t" style="left:107.70px;top:488.84px;font-size:12px;color:#000;transform:scaleX(0.9849)">Windows</span><span class="t" style="left:123.66px;top:506.84px;font-size:12px;color:#000;transform:scaleX(0.9874)">AssignedAccessConfiguration</span><span class="t" style="left:123.27px;top:524.84px;font-size:12px;color:#000;transform:scaleX(0.9764)">CurrentVersion</span><span class="t" style="left:122.88px;top:542.84px;font-size:12px;color:#000;transform:scaleX(1.0179)">DWM</span><span class="t" style="left:122.95px;top:560.84px;font-size:12px;color:#000;transform:scaleX(0.9503)">Shell</span><span class="t" style="left:123.64px;top:578.84px;font-size:12px;color:#000;transform:scaleX(0.9362)">TabletPC</span><span class="t" style="left:123.70px;top:596.84px;font-size:12px;color:#000;transform:scaleX(0.9812)">Windows Error Reporting</span><span class="t" style="left:123.69px;top:614.84px;font-size:12px;color:#000;transform:scaleX(1.0330)">Winlogon</span><span class="t" style="left:107.70px;top:632.84px;font-size:12px;color:#000;transform:scaleX(0.9883)">Windows NT</span><span class="t" style="left:355.87px;top:77.84px;font-size:12px;color:#000;transform:scaleX(1.0298)">Имя</span><span class="t" style="left:594.52px;top:77.84px;font-size:12px;color:#000;transform:scaleX(1.0005)">Тип</span><span class="t" style="left:714.12px;top:77.84px;font-size:12px;color:#000;transform:scaleX(0.9923)">Значение</span><span class="t" style="left:371.77px;top:99.84px;font-size:12px;color:#000;transform:scaleX(1.0495)">(По умолчанию)</span><span class="t" style="left:593.98px;top:99.84px;font-size:12px;color:#000;transform:scaleX(0.8247)">REG_SZ</span><span class="t" style="left:713.91px;top:99.84px;font-size:12px;color:#000;transform:scaleX(0.9995)">(значение не присвоено)</span><span class="t" style="left:372.36px;top:118.84px;font-size:12px;color:#000;transform:scaleX(1.0046)">AccentColor</span><span class="t" style="left:593.93px;top:118.84px;font-size:12px;color:#000;transform:scaleX(0.8691)">REG_DWORD</span><span class="t" style="left:714.22px;top:118.84px;font-size:12px;color:#000;transform:scaleX(0.9508)">0xff00b9ff (4278237695)</span><span class="t" style="left:372.36px;top:137.84px;font-size:12px;color:#000;transform:scaleX(0.9898)">AlwaysHibernateThumbnails</span><span class="t" style="left:593.93px;top:137.84px;font-size:12px;color:#000;transform:scaleX(0.8691)">REG_DWORD</span><span class="t" style="left:714.24px;top:137.84px;font-size:12px;color:#000;transform:scaleX(0.9141)">0x00000000 (0)</span><span class="t" style="left:371.94px;top:156.84px;font-size:12px;color:#000;transform:scaleX(1.0242)">ColorizationAfterglow</span><span class="t" style="left:593.93px;top:156.84px;font-size:12px;color:#000;transform:scaleX(0.8691)">REG_DWORD</span><span class="t" style="left:714.23px;top:156.84px;font-size:12px;color:#000;transform:scaleX(0.9372)">0xc4ffb900 (3305093376)</span><span class="t" style="left:371.95px;top:175.84px;font-size:12px;color:#000;transform:scaleX(1.0041)">ColorizationAfterglowBalance</span><span class="t" style="left:593.93px;top:175.84px;font-size:12px;color:#000;transform:scaleX(0.8691)">REG_DWORD</span><span class="t" style="left:714.24px;top:175.84px;font-size:12px;color:#000;transform:scaleX(0.9112)">0x0000000a (10)</span><span class="t" style="left:371.97px;top:194.84px;font-size:12px;color:#000;transform:scaleX(0.9839)">ColorizationBlurBalance</span><span class="t" style="left:593.93px;top:194.84px;font-size:12px;color:#000;transform:scaleX(0.8691)">REG_DWORD</span><span class="t" style="left:714.24px;top:194.84px;font-size:12px;color:#000;transform:scaleX(0.9105)">0x00000001 (1)</span><span class="t" style="left:371.95px;top:213.84px;font-size:12px;color:#000;transform:scaleX(1.0097)">ColorizationColor</span><span class="t" style="left:593.93px;top:213.84px;font-size:12px;color:#000;transform:scaleX(0.8691)">REG_DWORD</span><span class="t" style="left:714.23px;top:213.84px;font-size:12px;color:#000;transform:scaleX(0.9372)">0xc4ffb900 (3305093376)</span><span class="t" style="left:371.96px;top:232.84px;font-size:12px;color:#000;transform:scaleX(0.9897)">ColorizationColorBalance</span><span class="t" style="left:593.93px;top:232.84px;font-size:12px;color:#000;transform:scaleX(0.8691)">REG_DWORD</span><span class="t" style="left:714.24px;top:232.84px;font-size:12px;color:#000;transform:scaleX(0.9124)">0x00000059 (89)</span><span class="t" style="left:371.96px;top:251.84px;font-size:12px;color:#000;transform:scaleX(0.9930)">ColorizationGlassAttribute</span><span class="t" style="left:593.93px;top:251.84px;font-size:12px;color:#000;transform:scaleX(0.8691)">REG_DWORD</span><span class="t" style="left:714.24px;top:251.84px;font-size:12px;color:#000;transform:scaleX(0.9105)">0x00000001 (1)</span><span class="t" style="left:371.98px;top:270.84px;font-size:12px;color:#000;transform:scaleX(0.9684)">ColorPrevalence</span><span class="t" style="left:593.93px;top:270.84px;font-size:12px;color:#000;transform:scaleX(0.8691)">REG_DWORD</span><span class="t" style="left:714.24px;top:270.84px;font-size:12px;color:#000;transform:scaleX(0.9141)">0x00000000 (0)</span><span class="t" style="left:371.93px;top:289.84px;font-size:12px;color:#000;transform:scaleX(1.0364)">Composition</span><span class="t" style="left:593.93px;top:289.84px;font-size:12px;color:#000;transform:scaleX(0.8691)">REG_DWORD</span><span class="t" style="left:714.24px;top:289.84px;font-size:12px;color:#000;transform:scaleX(0.9105)">0x00000001 (1)</span><span class="t" style="left:371.66px;top:308.84px;font-size:12px;color:#000;transform:scaleX(0.9406)">EnableAeroPeek</span><span class="t" style="left:593.93px;top:308.84px;font-size:12px;color:#000;transform:scaleX(0.8691)">REG_DWORD</span><span class="t" style="left:714.24px;top:308.84px;font-size:12px;color:#000;transform:scaleX(0.9141)">0x00000000 (0)</span><span class="t" style="left:371.60px;top:327.84px;font-size:12px;color:#000;transform:scaleX(1.0005)">EnableWindowColorization</span><span class="t" style="left:593.93px;top:327.84px;font-size:12px;color:#000;transform:scaleX(0.8691)">REG_DWORD</span><span class="t" style="left:714.24px;top:327.84px;font-size:12px;color:#000;transform:scaleX(0.9105)">0x00000001 (1)</span><span class="t" style="left:384.84px;top:370.84px;font-size:12px;color:#000;transform:scaleX(0.9628)">Изменение параметра DWORD (32 бита)</span><span class="t" style="left:385.87px;top:402.84px;font-size:12px;color:#000;transform:scaleX(0.9296)">Параметр:</span><span class="t" style="left:389.23px;top:423.84px;font-size:12px;color:#000;transform:scaleX(0.8837)">ColorPrevalence</span><span class="t" style="left:386.18px;top:449.84px;font-size:12px;color:#000;transform:scaleX(0.9034)">Значение:</span><span class="t" style="left:389.12px;top:470.34px;font-size:12px;color:#000;transform:scaleX(0.6800)">1</span><span class="t" style="left:544.01px;top:449.84px;font-size:12px;color:#000;transform:scaleX(0.9179)">Система исчисления</span><span class="t" style="left:565.90px;top:468.84px;font-size:12px;color:#000;transform:scaleX(0.9020)">Шестнадцатеричная</span><span class="t" style="left:566.70px;top:490.14px;font-size:12px;color:#000;transform:scaleX(0.9327)">Десятичная</span><span class="t" style="left:569.37px;top:529.84px;font-size:12px;color:#000;transform:scaleX(0.8750)">OK</span><span class="t" style="left:640.26px;top:529.84px;font-size:12px;color:#000;transform:scaleX(0.9046)">Отмена</span>
<div id="bb"></div><div id="dk"></div>
</div></body></html>
